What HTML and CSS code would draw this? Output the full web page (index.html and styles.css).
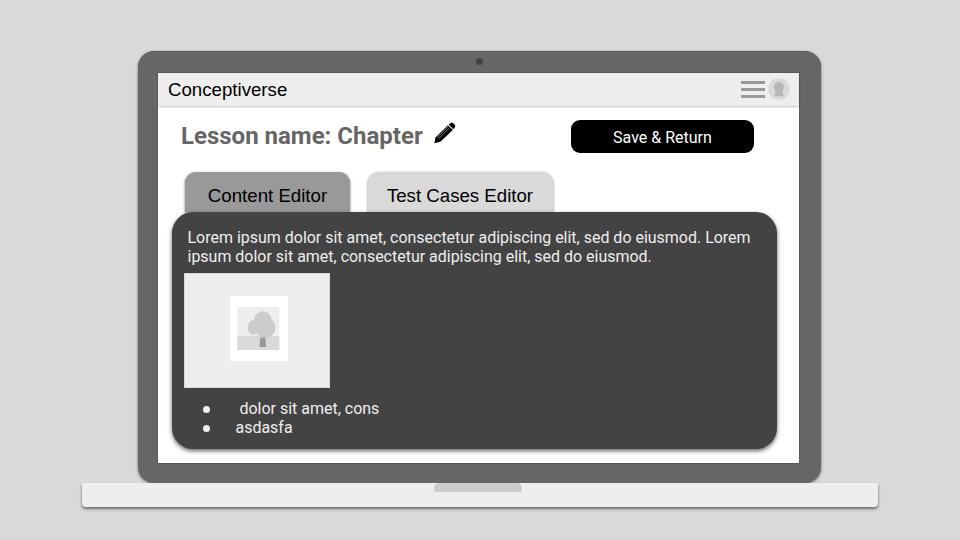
FILE: index.html
```html
<!DOCTYPE html>
<html lang="en">
<head>
<meta charset="utf-8">
<title>Conceptiverse</title>
<link rel="stylesheet" href="styles.css">
</head>
<body>
<div class="laptop">
  <div class="lid">
    <div class="camera"></div>
    <main class="screen">
      <header class="topbar">
        <span class="brand">Conceptiverse</span>
        <div class="menu"><i></i><i></i><i></i></div>
        <svg class="avatar" width="22" height="22" viewBox="0 0 22 22"><circle cx="11" cy="11" r="10.8" fill="#d9d9d9"/><circle cx="11" cy="9" r="5.2" fill="#b7b7b7"/><path d="M8 13h6q1.500 2 1.500 5.300h-9Q6.500 15 8 13z" fill="#b7b7b7"/></svg>
      </header>
      <div class="title-row">
        <h1>Lesson name: Chapter</h1>
        <svg class="pencil" width="22" height="22" viewBox="0 0 22 22"><path d="M.3 21.200 1.500 15.500 14 3.200 18.800 8 6.400 19.800z"/><path d="M14.800 2.500 16.800.9q1.200-.7 2.200.1l1.900 1.900q.8 1 .1 2.200L19.400 7.200z"/><path d="M3.200 15.500 14.200 4.600M4.700 16.600 15.200 6.200" stroke="#aaa" stroke-width=".7" fill="none"/></svg>
        <button class="save">Save &amp; Return</button>
      </div>
      <nav class="tabs">
        <div class="tab active">Content Editor</div>
        <div class="tab cases">Test Cases Editor</div>
      </nav>
      <section class="panel">
        <p>Lorem ipsum dolor sit amet, consectetur adipiscing elit, sed do eiusmod. Lorem<br>ipsum dolor sit amet, consectetur adipiscing elit, sed do eiusmod.</p>
        <div class="image">
          <svg width="58" height="65" viewBox="0 0 58 65"><path fill="#fff" d="M0 0h58v65H0z"/><path fill="#eee" d="M7.300 11h42v43h-42z"/><path fill="#d9d9d9" d="M7.300 40h42v14h-42z"/><g fill="#ccc"><ellipse cx="23" cy="31.500" rx="5.200" ry="7.200"/><circle cx="32.800" cy="23.800" r="8.600"/><circle cx="35" cy="31.500" r="10.500"/></g><path fill="#999" d="M30.300 41.500h5l.8 9.500h-6.700z"/></svg>
        </div>
        <ul>
          <li class="first">dolor sit amet, cons</li>
          <li>asdasfa</li>
        </ul>
      </section>
    </main>
  </div>
  <div class="base"><div class="notch"></div></div>
</div>
</body>
</html>
```
FILE: styles.css
```css
* { box-sizing: border-box; }
body {
  margin: 0;
  height: 540px;
  overflow: hidden;
  background: #d9d9d9;
  font-family: Roboto, sans-serif;
}
.laptop {
  display: flex;
  flex-direction: column;
  padding: 51px 82px 0;
}
.lid {
  width: 683px;
  height: 432px;
  margin-left: 56px;
  padding: 6px 22px 20px 20px;
  border: solid #595959;
  border-width: 1px 0 0;
  border-radius: 16px;
  background: #666;
  box-shadow: 0 1px 3px rgba(0, 0, 0, .5);
}
.camera {
  width: 7px;
  height: 7px;
  margin: 0 0 8px 317.500px;
  border-radius: 50%;
  background: #434343;
}
.screen {
  width: 641px;
  height: 390px;
  background: #fff;
  box-shadow: 0 0 0 1px #5a5a5a;
}
.topbar {
  display: flex;
  align-items: center;
  height: 33px;
  margin-left: 1px;
  padding: 0 9px 1px;
  background: #eee;
  box-shadow: 0 1px 2px rgba(0, 0, 0, .25);
}
.brand {
  flex: 1;
  font: 18.670px/22px "Liberation Sans", sans-serif;
  padding-top: 2px;
}
.menu {
  display: flex;
  flex-direction: column;
  gap: 4px;
  width: 24px;
  margin-right: 3px;
}
.menu i {
  height: 3px;
  background: #999;
}
.title-row {
  display: flex;
  align-items: center;
  height: 35px;
  margin-top: 13px;
  padding-left: 23px;
}
h1 {
  width: 253px;
  margin: -2px 0 0;
  color: #666;
  font-size: 24px;
  line-height: 28px;
  white-space: nowrap;
}
.pencil { margin-top: -7px; }
.save {
  width: 183px;
  height: 33px;
  margin-left: 115px;
  padding: 1px 0 0;
  border: 0;
  border-radius: 9px;
  background: #000;
  color: #fff;
  font: 16px/19px Roboto, sans-serif;
}
.tabs {
  display: flex;
  align-items: flex-end;
  gap: 17.500px;
  height: 58px;
  padding-left: 27px;
}
.tab {
  width: 165px;
  height: 40px;
  padding-top: 13px;
  border-radius: 11px 11px 0 0;
  background: #999;
  box-shadow: 0 1px 3px rgba(0, 0, 0, .5);
  font: 18.670px/21px "Liberation Sans", sans-serif;
  text-align: center;
}
.cases {
  width: 185px;
  background: #d9d9d9;
}
.panel {
  position: relative;
  width: 605px;
  height: 237px;
  margin-left: 14px;
  padding: 16px 12px 0;
  border-radius: 21px;
  background: #434343;
  color: #eee;
  box-shadow: 0 2px 4px rgba(0, 0, 0, .6);
  font-size: 15.980px;
  line-height: 19px;
}
.panel p {
  margin: 0 0 7px 3.500px;
  white-space: nowrap;
}
.image {
  display: flex;
  align-items: center;
  justify-content: center;
  width: 146px;
  height: 115px;
  padding: 0 0 4px 3px;
  border: 1px solid #d9d9d9;
  background: #eee;
}
ul {
  margin: 11px 0 0 19px;
  padding: 0;
  list-style: none;
}
li {
  display: flex;
  align-items: center;
}
li::before {
  content: "";
  width: 7px;
  height: 7px;
  margin: 2px 25.500px 0 0;
  border-radius: 50%;
  background: #eee;
}
.first::before { margin-right: 29.500px; }
.base {
  width: 796px;
  height: 24px;
  border-radius: 0 0 4px 4px;
  background: #eee;
  box-shadow: 0 2px 3px rgba(0, 0, 0, .5);
}
.notch {
  width: 88px;
  height: 9px;
  margin-left: 351.500px;
  border-radius: 5px 5px 2px 2px;
  background: #ccc;
}
```
